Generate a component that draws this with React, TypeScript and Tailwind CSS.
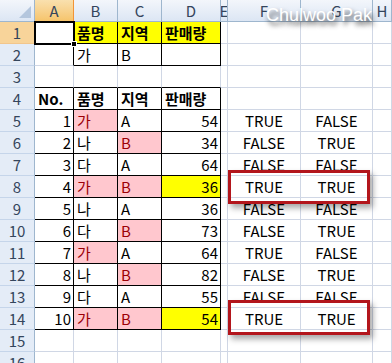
import React from 'react';

type Cell = {
  v?: string;
  align?: 'l' | 'r' | 'c';
  bold?: boolean;
  fill?: 'y' | 'p';
};

const COLS = ['A', 'B', 'C', 'D', 'E', 'F', 'G', 'H'];

// 표 데이터 (No, 품명, 지역, 판매량, F, G)
const DATA: [string, string, string, string, string, string][] = [
  ['1', '가', 'A', '54', 'TRUE', 'FALSE'],
  ['2', '나', 'B', '34', 'FALSE', 'TRUE'],
  ['3', '다', 'A', '64', 'FALSE', 'FALSE'],
  ['4', '가', 'B', '36', 'TRUE', 'TRUE'],
  ['5', '나', 'A', '36', 'FALSE', 'FALSE'],
  ['6', '다', 'B', '73', 'FALSE', 'TRUE'],
  ['7', '가', 'A', '64', 'TRUE', 'FALSE'],
  ['8', '나', 'B', '82', 'FALSE', 'TRUE'],
  ['9', '다', 'A', '55', 'FALSE', 'FALSE'],
  ['10', '가', 'B', '54', 'TRUE', 'TRUE'],
];

const buildSheet = (): Record<string, Cell> => {
  const s: Record<string, Cell> = {};
  s['B1'] = { v: '품명', bold: true, fill: 'y' };
  s['C1'] = { v: '지역', bold: true, fill: 'y' };
  s['D1'] = { v: '판매량', bold: true, fill: 'y' };
  s['B2'] = { v: '가' };
  s['C2'] = { v: 'B' };
  s['A4'] = { v: 'No.', bold: true };
  s['B4'] = { v: '품명', bold: true };
  s['C4'] = { v: '지역', bold: true };
  s['D4'] = { v: '판매량', bold: true };
  DATA.forEach((d, i) => {
    const r = i + 5;
    const both = d[4] === 'TRUE' && d[5] === 'TRUE';
    s['A' + r] = { v: d[0], align: 'r' };
    s['B' + r] = { v: d[1], fill: d[1] === '가' ? 'p' : undefined };
    s['C' + r] = { v: d[2], fill: d[2] === 'B' ? 'p' : undefined };
    s['D' + r] = { v: d[3], align: 'r', fill: both ? 'y' : undefined };
    s['F' + r] = { v: d[4], align: 'c' };
    s['G' + r] = { v: d[5], align: 'c' };
  });
  return s;
};

const SHEET = buildSheet();

// 검은 테두리 영역: B1:D2, A4:D14
const inBox = (r: number, c: number) =>
  (r >= 1 && r <= 2 && c >= 2 && c <= 4) || (r >= 4 && r <= 14 && c >= 1 && c <= 4);

const ROWS = Array.from({ length: 16 }, (_, i) => i + 1);

const App: React.FC = () => {
  return (
    <div
      className="relative w-[392px] h-[363px] overflow-hidden bg-white text-[15px] text-black"
      style={{ fontFamily: '"Noto Sans CJK KR", "Liberation Sans", sans-serif' }}
    >
      <div className="grid grid-cols-[35px_39px_44px_44px_59px_7px_73px_72px_1fr] auto-rows-[22px]">
        {/* 열 머리글 */}
        <div className="relative border-r border-b border-[#9eb6ce] bg-gradient-to-b from-[#f3f6fb] to-[#dce6f4]">
          <div className="absolute right-[3px] bottom-[3px] w-0 h-0 border-l-[12px] border-l-transparent border-b-[12px] border-b-[#b4c6dd]" />
        </div>
        {COLS.map((c) =>
          c === 'A' ? (
            <div
              key={c}
              className="flex items-center justify-center border-r border-b border-[#f29436] bg-gradient-to-b from-[#f9e0ae] to-[#f6c46b] text-[#34455c] leading-none"
            >
              {c}
            </div>
          ) : (
            <div
              key={c}
              className="flex items-center justify-center border-r border-b border-[#9eb6ce] bg-gradient-to-b from-[#f3f6fb] to-[#dce6f4] text-[#34455c] leading-none overflow-hidden"
            >
              {c}
            </div>
          )
        )}

        {ROWS.map((r) => (
          <React.Fragment key={r}>
            <div
              className={
                r === 1
                  ? 'flex items-center justify-center border-r border-b border-r-[#f29436] border-b-[#f2c68c] bg-[#f8d49a] text-[#34455c] leading-none'
                  : 'flex items-center justify-center border-r border-b border-r-[#9eb6ce] border-b-[#c5d5ea] bg-[#e4ecf7] text-[#34455c] leading-none'
              }
            >
              {r}
            </div>
            {COLS.map((c, ci) => {
              const col = ci + 1;
              const cell = SHEET[c + r] || {};
              const rightBlack = inBox(r, col) || inBox(r, col + 1);
              const bottomBlack = inBox(r, col) || inBox(r + 1, col);
              const fillCls =
                cell.fill === 'y' ? 'bg-[#ffff00]' : cell.fill === 'p' ? 'bg-[#ffc7ce] text-[#9c0006]' : 'bg-white';
              const alignCls =
                cell.align === 'r'
                  ? 'justify-end pr-[2px]'
                  : cell.align === 'c'
                  ? 'justify-center'
                  : 'justify-start pl-[3px]';
              return (
                <div
                  key={c}
                  className={[
                    'flex items-center overflow-hidden whitespace-nowrap border-r border-b leading-[21px]',
                    rightBlack ? 'border-r-black' : 'border-r-[#d0d7e5]',
                    bottomBlack ? 'border-b-black' : 'border-b-[#d0d7e5]',
                    fillCls,
                    alignCls,
                    cell.bold ? 'font-bold' : '',
                  ].join(' ')}
                >
                  {cell.v}
                </div>
              );
            })}
          </React.Fragment>
        ))}
      </div>

      {/* 활성 셀 A1 */}
      <div className="absolute left-[34px] top-[21px] w-[41px] h-[24px] border-2 border-black" />
      <div className="absolute left-[71px] top-[41px] w-[6px] h-[6px] bg-black border border-white" />

      {/* 강조 상자 */}
      <div className="absolute left-[228px] top-[170px] w-[142px] h-[34px] border-[3px] border-[#b3161c] shadow-[3px_4px_6px_rgba(0,0,0,0.35)]" />
      <div className="absolute left-[228px] top-[300px] w-[142px] h-[35px] border-[3px] border-[#b3161c] shadow-[3px_4px_6px_rgba(0,0,0,0.35)]" />

      {/* 워터마크 */}
      <div
        className="absolute left-[266px] top-[6px] text-[18px] text-white leading-none [text-shadow:2px_4px_5px_rgba(50,50,50,0.95)]"
        style={{ fontFamily: '"Liberation Sans", Arial, sans-serif' }}
      >
        Chulwoo Pak
      </div>
    </div>
  );
};

export default App;
